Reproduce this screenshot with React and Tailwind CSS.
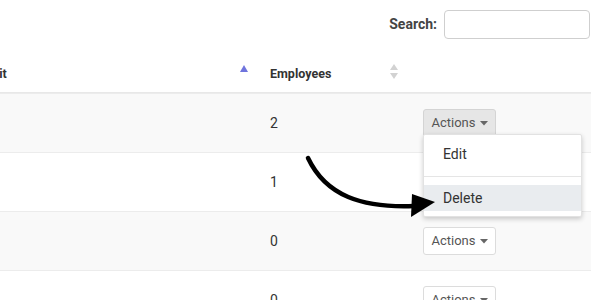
import React from 'react';

const rows = [
  { employees: 2, striped: true, open: true },
  { employees: 1, striped: false },
  { employees: 0, striped: true },
  { employees: 0, striped: false },
];

const Caret = () => (
  <svg width="8" height="5" viewBox="0 0 8 5" className="ml-[4px]">
    <path d="M0 0 L8 0 L4 4.5 Z" fill="#666" />
  </svg>
);

const ActionsButton = ({ active }) => (
  <button
    className={`flex items-center h-[28px] w-[73px] justify-center rounded-[3px] border text-[13px] text-[#555] ${
      active ? 'bg-[#e6e6e6] border-[#d4d4d4]' : 'bg-white border-[#dcdcdc]'
    }`}
  >
    Actions
    <Caret />
  </button>
);

const App = () => {
  return (
    <div className="relative w-[600px] h-[300px] overflow-hidden bg-white font-['Roboto',sans-serif] text-[#333]">
      {/* Search */}
      <div className="flex items-center justify-end pt-[10px] pr-[10px]">
        <label className="text-[14px] font-bold text-[#444] mr-[7px]">Search:</label>
        <input className="w-[146px] h-[29px] rounded-[4px] border border-[#cfcfcf] outline-none" />
      </div>

      {/* Table */}
      <div className="ml-[-20px] w-[611px] mt-[15px]">
        <div className="grid grid-cols-[278px_153px_180px] h-[39px] border-b border-[#e8e8e8] text-[12.5px] font-bold">
          <div className="flex items-center justify-between pl-[4px] pr-[10px]">
            <span className="mt-[2px]">Unit</span>
            <svg width="8" height="7" viewBox="0 0 8 7" className="mb-[10px]">
              <path d="M4 0 L8 7 L0 7 Z" fill="#6f74dd" />
            </svg>
          </div>
          <div className="flex items-center justify-between pl-[12px] pr-[13px]">
            <span className="mt-[2px]">Employees</span>
            <svg width="8" height="16" viewBox="0 0 8 16" className="mb-[3px]">
              <path d="M4 0 L8 6 L0 6 Z" fill="#d2d2d2" />
              <path d="M0 9 L8 9 L4 15 Z" fill="#d2d2d2" />
            </svg>
          </div>
          <div />
        </div>

        {rows.map((r, i) => (
          <div
            key={i}
            className={`grid grid-cols-[278px_153px_180px] h-[59px] border-t border-[#ececec] first:border-t-0 text-[14px] ${
              r.striped ? 'bg-[#f9f9f9]' : 'bg-white'
            }`}
          >
            <div />
            <div className="flex items-center pl-[12px]">{r.employees}</div>
            <div className="flex items-center pl-[12px]">
              <ActionsButton active={r.open} />
            </div>
          </div>
        ))}
      </div>

      {/* Dropdown menu */}
      <div className="absolute left-[423px] top-[134px] w-[159px] bg-white border border-[#e2e2e2] rounded-[2px] shadow-[0_2px_5px_rgba(0,0,0,0.2)] pt-[6px] pb-[5px] text-[14px] text-[#333]">
        <div className="h-[26px] flex items-center pl-[19px]">Edit</div>
        <div className="h-px bg-[#e5e5e5] mt-[9px] mb-[8px]" />
        <div className="h-[26px] flex items-center pl-[19px] bg-[#e9ecef]">Delete</div>
      </div>

      {/* Annotation arrow */}
      <svg className="absolute left-0 top-0 pointer-events-none" width="600" height="300">
        <path
          d="M308 158 C326 196 362 208 414 206"
          fill="none"
          stroke="#000"
          strokeWidth="4.5"
          strokeLinecap="round"
        />
        <path d="M412 194 L435 202 L411 217 Z" fill="#000" />
      </svg>
    </div>
  );
};

export default App;
